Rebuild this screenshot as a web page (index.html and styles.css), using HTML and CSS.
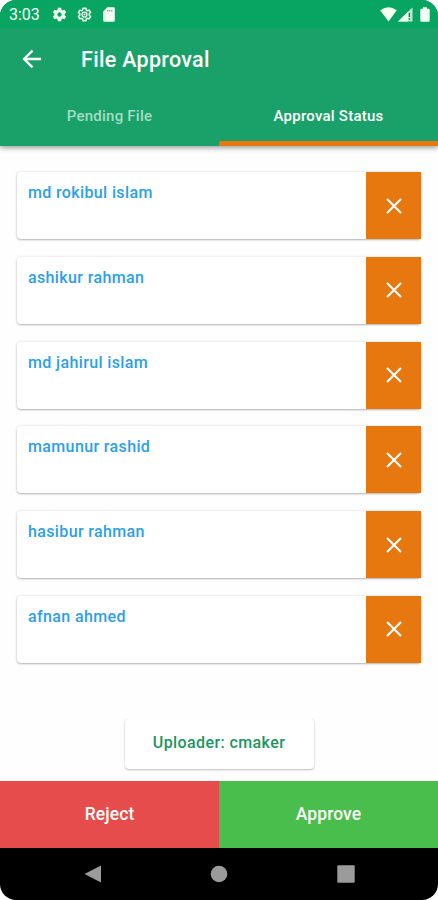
FILE: index.html
```html
<!DOCTYPE html>
<html lang="en">
<head>
<meta charset="utf-8">
<title>File Approval</title>
<link rel="stylesheet" href="styles.css">
</head>
<body>
<div class="phone">
  <header class="header">
    <div class="status">
      <span class="time">3:03</span>
      <svg class="gear" viewBox="1 1 22 22"><path fill="currentColor" fill-rule="evenodd" d="M9.6 2h4.8l.5 3 1.7 1 2.8-1.1 2.4 4.1-2.3 1.9v2.2l2.3 1.9-2.4 4.1-2.8-1.1-1.7 1-.5 3H9.6l-.5-3-1.7-1-2.8 1.1L2.2 15l2.3-1.9v-2.2L2.2 9l2.4-4.1L7.4 6l1.7-1zM12 8.8a3.2 3.2 0 1 0 0 6.4 3.2 3.2 0 0 0 0-6.4z"/></svg>
      <svg class="gear gear-outline" viewBox="0 0 24 24"><path fill="none" stroke="currentColor" stroke-width="2.3" stroke-linejoin="round" d="M9.6 2h4.8l.5 3 1.7 1 2.8-1.1 2.4 4.1-2.3 1.9v2.2l2.3 1.9-2.4 4.1-2.8-1.1-1.7 1-.5 3H9.6l-.5-3-1.7-1-2.8 1.1L2.2 15l2.3-1.9v-2.2L2.2 9l2.4-4.1L7.4 6l1.7-1z"/><circle cx="12" cy="12" r="4" fill="none" stroke="currentColor" stroke-width="2"/><circle cx="12" cy="12" r="1.5" fill="currentColor"/></svg>
      <svg class="sd" viewBox="0 0 12 15"><path fill="currentColor" fill-rule="evenodd" d="M4.3.3h6.4q1.1 0 1.1 1.1v12.2q0 1.1-1.1 1.1H1.3q-1.1 0-1.1-1.1V4.4zM4.4 3v1.6h.9V3zm2 0v1.6h.9V3zm2 0v1.6h.9V3z"/></svg>
      <span class="spacer"></span>
      <svg class="wifi" viewBox="0 0 17 15"><path fill="currentColor" d="M.2 3.3Q8.5-2.9 16.8 3.3L8.5 14.6z"/></svg>
      <svg class="signal" viewBox="0 0 15 15"><path fill="currentColor" opacity=".75" d="M14.5.2v14.3H.2z"/><path fill="currentColor" d="M10 4.7v9.8H.2z"/><path stroke="#237b4c" stroke-width="1.3" d="M11.4 6v4m0 1.2v1.6"/></svg>
      <svg class="battery" viewBox="0 0 10 15"><path fill="currentColor" d="M3 .2h4v1.5h1.5q1.2 0 1.2 1.2v10.6q0 1.2-1.2 1.2h-7Q.3 14.7.3 13.5V2.9q0-1.2 1.2-1.2H3z"/></svg>
    </div>
    <div class="appbar">
      <svg class="back" viewBox="0 0 20 20"><path fill="none" stroke="currentColor" stroke-width="2.3" d="M19 10H2.5M10.5 1.6 2.1 10l8.4 8.4"/></svg>
      <h1 class="title">File Approval</h1>
    </div>
    <nav class="tabs">
      <div class="tab"><span>Pending File</span></div>
      <div class="tab active"><span>Approval Status</span></div>
    </nav>
  </header>
  <main class="list">
    <div class="card"><span class="name">md rokibul islam</span><button class="remove"><svg viewBox="0 0 16 16"><path d="m1 1 14 14M15 1 1 15"/></svg></button></div>
    <div class="card"><span class="name">ashikur rahman</span><button class="remove"><svg viewBox="0 0 16 16"><path d="m1 1 14 14M15 1 1 15"/></svg></button></div>
    <div class="card"><span class="name">md jahirul islam</span><button class="remove"><svg viewBox="0 0 16 16"><path d="m1 1 14 14M15 1 1 15"/></svg></button></div>
    <div class="card"><span class="name">mamunur rashid</span><button class="remove"><svg viewBox="0 0 16 16"><path d="m1 1 14 14M15 1 1 15"/></svg></button></div>
    <div class="card"><span class="name">hasibur rahman</span><button class="remove"><svg viewBox="0 0 16 16"><path d="m1 1 14 14M15 1 1 15"/></svg></button></div>
    <div class="card"><span class="name">afnan ahmed</span><button class="remove"><svg viewBox="0 0 16 16"><path d="m1 1 14 14M15 1 1 15"/></svg></button></div>
  </main>
  <div class="uploader-clip"><div class="uploader">Uploader: cmaker</div></div>
  <div class="actions">
    <button class="action reject">Reject</button>
    <button class="action approve">Approve</button>
  </div>
  <footer class="navbar">
    <svg viewBox="0 0 18 18"><path d="M17 .5v17L.5 9z"/></svg>
    <svg viewBox="0 0 18 18"><circle cx="9" cy="9" r="8.3"/></svg>
    <svg viewBox="0 0 18 18"><rect x=".3" y=".3" width="17.4" height="17.4" rx="1"/></svg>
  </footer>
</div>
</body>
</html>
```
FILE: styles.css
```css
* { box-sizing: border-box; }
body { margin: 0; background: #fff; font-family: Roboto, sans-serif; }
button { border: 0; padding: 0; font: inherit; }
svg { display: block; flex: none; }
.phone {
  width: 438px; height: 900px; display: flex; flex-direction: column;
  overflow: hidden; border-radius: 16px; background: #fefefe;
}
.header {
  height: 146px; flex: none; background: #19a169; color: #fff;
  display: flex; flex-direction: column; box-shadow: 0 2px 5px rgba(0, 0, 0, .38);
}
.status {
  height: 28px; flex: none; display: flex; align-items: center;
  background: #08a562; color: #f4fff4; padding: 0 8px 0 9px;
}
.time { font-size: 16px; width: 43px; line-height: 28px; padding-top: 1px; }
.gear { width: 15px; height: 15px; }
.gear-outline { margin-left: 10px; }
.sd { width: 12px; height: 15px; margin-left: 11px; }
.spacer { flex: 1; }
.wifi { width: 17px; height: 15px; }
.signal { width: 15px; height: 15px; margin-left: 1px; }
.battery { width: 10px; height: 15px; margin-left: 7px; }
.appbar { height: 60px; display: flex; align-items: center; padding: 2px 0 0 22px; }
.back { width: 20px; height: 20px; }
.title { margin: 1px 0 0 39px; font-size: 21.5px; font-weight: 500; line-height: 28px; letter-spacing: .3px; }
.tabs { flex: 1; display: grid; grid-template-columns: 1fr 1fr; }
.tab {
  display: flex; justify-content: center; padding-top: 18px;
  font-size: 15px; line-height: 20px; font-weight: 500; color: #a3dcc3; letter-spacing: .24px;
}
.tab.active { color: #fff; border-bottom: 5px solid #e8770d; }
.list { flex: none; height: 573px; display: flex; flex-direction: column; gap: 17.8px; padding: 26px 17px 0; }
.card {
  height: 67px; flex: none; display: flex;
  background: #fff; border-radius: 4px;
  box-shadow: 0 1px 2px rgba(0, 0, 0, .26), 0 0 3px rgba(0, 0, 0, .12);
}
.name { flex: 1; padding: 11px 0 0 11px; font-size: 16px; line-height: 20px; font-weight: 500; color: #2c9fe8; letter-spacing: .37px; }
.remove { width: 55px; height: 67px; background: #e7780f; display: flex; align-items: center; justify-content: center; }
.remove svg { width: 16px; height: 16px; }
.remove path { stroke: #fff; stroke-width: 2.1; }
.uploader-clip { height: 61.5px; flex: none; overflow: hidden; display: flex; justify-content: center; }
.uploader {
  width: 189px; height: 50px; background: #fff; border-radius: 4px; text-align: center;
  font-size: 16px; line-height: 48px; font-weight: 500; color: #1a9662; letter-spacing: .4px;
  box-shadow: 0 1px 2px rgba(0, 0, 0, .24), 0 0 2px rgba(0, 0, 0, .1);
}
.actions { height: 67px; flex: none; display: grid; grid-template-columns: 1fr 1fr; }
.action { color: #fff; font-size: 17.5px; font-weight: 500; letter-spacing: .1px; }
.reject { background: #e54c4b; }
.approve { background: #49be4c; }
.navbar { flex: 1; background: #000; display: flex; align-items: center; justify-content: center; gap: 108.5px; }
.navbar svg { width: 18px; height: 18px; fill: #9b9b9b; }
```
